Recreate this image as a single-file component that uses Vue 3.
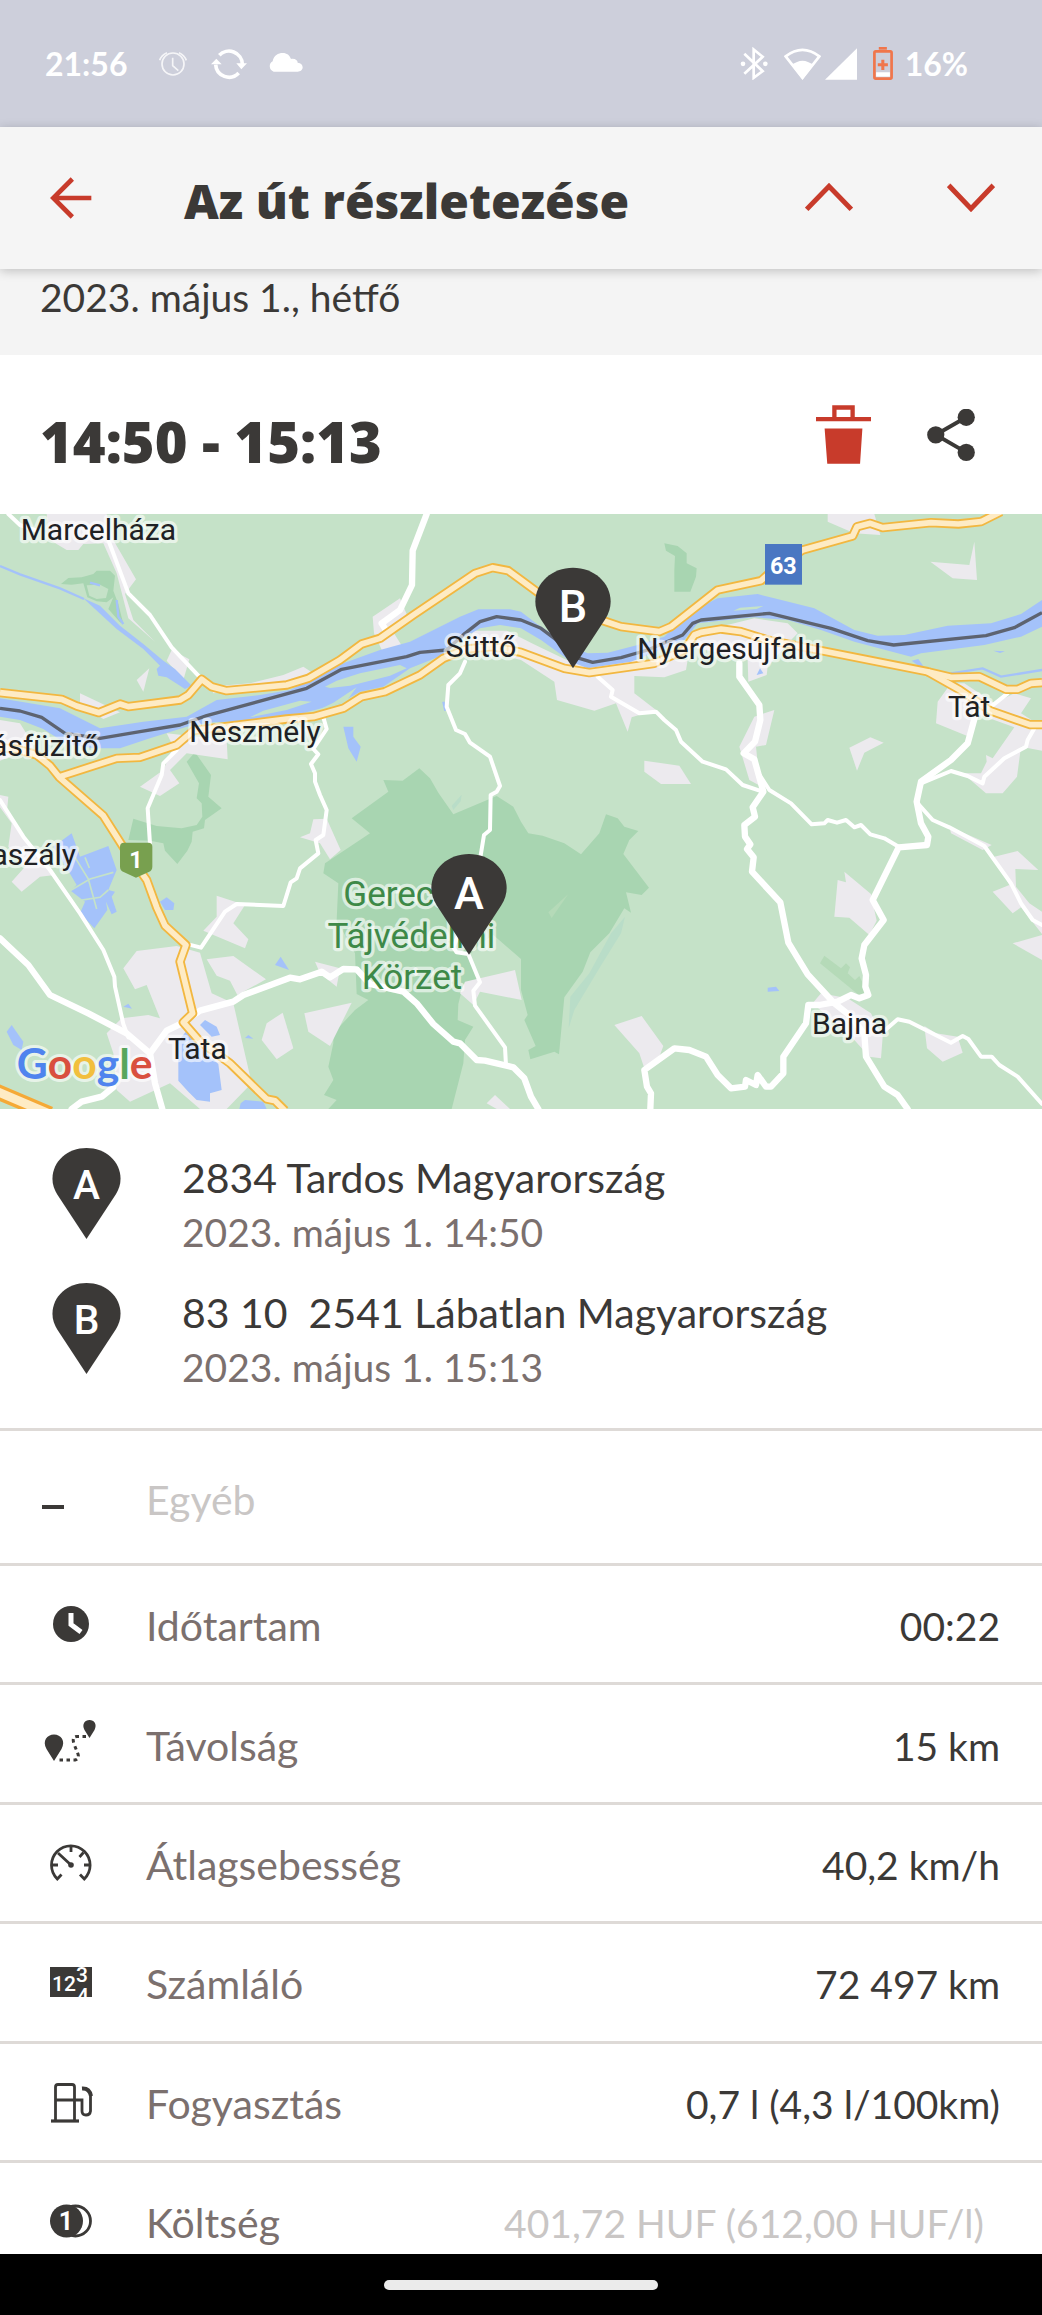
<template>
  <div class="screen">
    <header class="status-bar">
      <div class="status-left">
        <span>21:56</span>
        <svg class="status-icon" viewBox="0 0 108 108" fill="none" stroke="#fff" stroke-width="5" opacity="0.8">
          <circle cx="54" cy="54" r="33" />
          <path d="M53 35V59L70 74M14 43Q19 27 36 20M94 43Q88 27 72 20" />
        </svg>
        <svg class="status-icon" viewBox="0 0 108 108">
          <path d="M25 28A40 40 0 0 1 94 54M83 81A40 40 0 0 1 14 56" fill="none" stroke="#fff" stroke-width="11" />
          <path d="M76 52H108L91 70ZM0 55H32L16 38Z" fill="#fff" />
        </svg>
        <svg class="status-icon" viewBox="0 0 108 108">
          <path d="M20 77A17 17 0 0 1 17 46C20 28 34 21 47 21C60 21 68 28 72 39C84 37 92 43 92 50C102 51 107 57 107 64C107 72 100 77 92 77Z" fill="#fff" />
        </svg>
      </div>
      <div class="status-right">
        <svg width="28" height="33" viewBox="0 0 84 98">
          <path d="M13 20L68 72L41 92V7L68 29L13 80" fill="none" stroke="#fff" stroke-width="8" />
          <circle cx="9" cy="50" r="7" fill="#fff" />
          <circle cx="76" cy="50" r="7" fill="#fff" />
        </svg>
        <div class="signal-pair">
          <svg width="37" height="32" viewBox="0 0 112 96">
            <path d="M5 25Q56 -14 107 25L56 90Z" fill="none" stroke="#fff" stroke-width="8" />
            <path d="M23 52Q56 24 89 52L56 95Z" fill="#fff" />
          </svg>
          <svg width="32" height="32" viewBox="0 0 96 96"><path d="M0 95H96V1Z" fill="#fff" /></svg>
        </div>
        <div class="battery">
          <svg width="20" height="33" viewBox="0 0 59 98">
            <path d="M17 0H41V8H17Z" fill="#f0764b" />
            <rect x="4" y="13" width="51" height="81" rx="4" fill="none" stroke="#f0764b" stroke-width="8" />
            <path d="M29 38V68M14 53H44" stroke="#f0764b" stroke-width="9" />
            <path d="M9 75H50V88H9Z" fill="#fff" />
          </svg>
          <span>16%</span>
        </div>
      </div>
    </header>

    <nav class="app-bar">
      <button class="icon-btn" type="button" aria-label="Vissza">
        <svg viewBox="0 0 144 144"><path d="M76 15L19 72L76 129M19 72H133" stroke-width="14" /></svg>
      </button>
      <h1>Az út részletezése</h1>
      <div class="app-bar-actions">
        <button class="icon-btn" type="button" aria-label="Előző út">
          <svg viewBox="0 0 144 144"><path d="M5 106L72 37L139 106" stroke-width="15" /></svg>
        </button>
        <button class="icon-btn" type="button" aria-label="Következő út">
          <svg viewBox="0 0 144 144"><path d="M5 34L72 104L139 34" stroke-width="15" /></svg>
        </button>
      </div>
    </nav>

    <main class="content">
      <p class="date">2023. május 1., hétfő</p>

      <section class="trip-head">
        <h2>14:50 - 15:13</h2>
        <button class="plain-btn" type="button" aria-label="Törlés">
          <svg width="55" height="59" viewBox="0 0 166 176" fill="#c83b2b">
            <path d="M0 35H166V48H0ZM49 0H117V35H104V13H62V35H49ZM26 70H140L133 176H34Z" />
          </svg>
        </button>
        <button class="plain-btn" type="button" aria-label="Megosztás">
          <svg width="48" height="52" viewBox="0 0 144 157" fill="#3b3937">
            <path d="M118 25L26 78L118 131" fill="none" stroke="#3b3937" stroke-width="12" />
            <circle cx="118" cy="25" r="26" />
            <circle cx="26" cy="78" r="26" />
            <circle cx="118" cy="131" r="26" />
          </svg>
        </button>
      </section>

      <svg class="map" viewBox="0 0 3126 1785" role="img" aria-label="Térkép">
        <rect width="3126" height="1785" fill="#c5e2c8" />
        <path v-for="d in map.parks" :key="d" :d="d" fill="#a8d5b1" />
        <path d="M2473 1325L2523 1363L2538 1348L2550 1360L2543 1378L2565 1398L2578 1386L2593 1418V1443L2573 1440L2460 1348Z" fill="#b5dab8" />
        <path d="M1875 1208L1863 1258L1798 1363L1723 1488L1706 1543L1711 1448L1768 1378L1833 1258ZM1355 875L1385 842L1382 862L1360 888Z" fill="#b9ddc8" />
        <path d="M1705 1140L1645 1195L1655 1212Z" fill="#b5dab8" />
        <path d="M260 214L300 212L325 225L318 252L290 255L268 245Z" fill="#c5e2c8" />
        <path v-for="d in map.towns" :key="d" :d="d" fill="#eceaee" />
        <path v-for="d in map.water" :key="d" :d="d" fill="#a4c2fa" />
        <path v-for="d in map.islands" :key="d" :d="d" fill="#c5e2c8" />
        <path d="M0 156L60 181L180 223L252 255M270 206L300 214M350 258L355 308L370 330M2853 478L2948 463L3003 488L3126 468M1330 563L1336 590" fill="none" stroke="#a4c2fa" stroke-width="7" />
        <path d="M225 1030L265 1095L290 1185M210 1130L270 1095L340 1075M255 1030L268 1062M235 1160L300 1150L325 1128" fill="none" stroke="#c5e2c8" stroke-width="5" />
        <path :d="map.border" fill="none" stroke="#5d6370" stroke-width="10" stroke-linejoin="round" />
        <g fill="none" stroke="#fff" stroke-linejoin="round" stroke-linecap="round">
          <path v-for="d in map.lanes" :key="d" :d="d" stroke-width="12" />
          <path v-for="d in map.streets" :key="d" :d="d" stroke-width="19" />
        </g>
        <g fill="none" stroke-linejoin="round">
          <path v-for="d in map.highways" :key="d" :d="d" stroke="#f2b740" stroke-width="28" />
          <path d="M-20 1728L150 1800" stroke="#f5a936" stroke-width="46" />
          <path v-for="d in map.highways" :key="d" :d="d" stroke="#feebc4" stroke-width="17" />
          <path d="M-20 1728L150 1800" stroke="#feebc4" stroke-width="26" />
        </g>

        <rect x="2295" y="90" width="111" height="122" fill="#4a77c2" />
        <text class="shield" x="2350" y="181">63</text>
        <path d="M372 986H445Q457 986 457 998V1058Q457 1070 446 1074L408 1091L371 1074Q360 1070 360 1058V998Q360 986 372 986Z" fill="#78a04f" />
        <text class="shield" x="408" y="1062">1</text>

        <text
          v-for="label in labels"
          :key="label.name"
          class="map-label"
          :class="{ park: label.park }"
          :x="label.x"
          :y="label.y"
          :text-anchor="label.anchor"
        >{{ label.name }}</text>

        <text class="brand" x="50" y="1694">
          <tspan fill="#4f84ee">G</tspan><tspan fill="#d9503f">o</tspan><tspan fill="#f2bf3e">o</tspan><tspan fill="#4f84ee">g</tspan><tspan fill="#58a65c">l</tspan><tspan fill="#d9503f">e</tspan>
        </text>

        <g v-for="stop in stops" :key="stop.letter" :transform="`translate(${stop.x} ${stop.y})`">
          <path :d="pinShape" fill="#3b3937" />
          <text class="pin-letter" x="0" y="-138">{{ stop.letter }}</text>
        </g>
      </svg>

      <ul class="stops">
        <li v-for="stop in stops" :key="stop.letter">
          <svg class="pin" viewBox="-113 -302 226 302">
            <path :d="pinShape" fill="#3b3937" />
            <text class="pin-letter" x="0" y="-134">{{ stop.letter }}</text>
          </svg>
          <div>
            <p class="address">{{ stop.address }}</p>
            <p class="time">{{ stop.time }}</p>
          </div>
        </li>
      </ul>

      <div class="category">
        <span class="dash"></span>
        <span class="category-name">Egyéb</span>
      </div>

      <dl class="facts">
        <div v-for="fact in facts" :key="fact.icon" class="fact">
          <svg class="fact-icon" viewBox="0 0 54 54" fill="none" stroke="#3b3937">
            <template v-if="fact.icon === 'clock'">
              <circle cx="27" cy="27" r="18" fill="#3b3937" stroke="none" />
              <path d="M27 16V27.500L37 35" stroke="#fff" stroke-width="5" />
            </template>
            <template v-else-if="fact.icon === 'route'">
              <path d="M10 44L2.500 32C-2 24 3 17.500 10 17.500S22 24 17.500 32ZM45.500 21L40.500 13C37.500 7 41 3 45.500 3S53.500 7 50.500 13Z" fill="#3b3937" stroke="none" />
              <path d="M15.500 43H31Q35.500 42 34 37L30 27Q27.500 19.500 33 19.500H42" stroke-width="3" stroke-dasharray="3.500 3.500" />
            </template>
            <template v-else-if="fact.icon === 'gauge'">
              <path d="M17.500 38.500L13.300 43A19.300 19.300 0 1 1 40.300 43L36 38.500" stroke-width="2.800" />
              <path d="M27 10V16M8 29H14M40 29H46M39.500 16.500L35.500 21M14 17L27 29" stroke-width="2.800" />
              <circle cx="27" cy="29" r="2.800" fill="#3b3937" stroke="none" />
            </template>
            <template v-else-if="fact.icon === 'counter'">
              <clipPath id="counter-face"><path d="M6 12H48V42H6Z" /></clipPath>
              <path d="M6 12H48V42H6Z" fill="#3b3937" stroke="none" />
              <g class="digits" clip-path="url(#counter-face)">
                <text x="8" y="36">12</text>
                <text x="32" y="27">3</text>
                <text x="33" y="48">4</text>
              </g>
            </template>
            <template v-else-if="fact.icon === 'fuel'">
              <path d="M11.500 45V12Q11.500 9.500 14 9.500H28Q30.500 9.500 30.500 12V45M11.500 25H38V36Q38 40 42 40T46.500 36V20" stroke-width="2.800" />
              <path d="M7 46H35" stroke-width="3.200" />
              <path d="M38 13.500Q45.500 13 47 21" stroke-width="4" />
            </template>
            <template v-else>
              <circle cx="31.500" cy="27" r="15" fill="#fff" stroke-width="2.800" />
              <circle cx="22.500" cy="27" r="16.500" fill="#3b3937" stroke="none" />
              <text class="coin" x="22" y="36">1</text>
            </template>
          </svg>
          <dt>{{ fact.label }}</dt>
          <dd :class="{ muted: fact.muted }">{{ fact.value }}</dd>
        </div>
      </dl>
    </main>

    <footer class="gesture-bar"><span></span></footer>
  </div>
</template>

<script setup>
// Pin with its tip at the origin
const pinShape = 'M0 0L-97 -148Q-113 -174 -113 -200C-113 -258 -62 -302 0 -302S113 -258 113 -200Q113 -174 97 -148Z'

const stops = [
  { letter: 'A', x: 1407, y: 1322, address: '2834 Tardos Magyarország', time: '2023. május 1. 14:50' },
  { letter: 'B', x: 1719, y: 463, address: '83 10  2541 Lábatlan Magyarország', time: '2023. május 1. 15:13' }
]

const facts = [
  { icon: 'clock', label: 'Időtartam', value: '00:22' },
  { icon: 'route', label: 'Távolság', value: '15 km' },
  { icon: 'gauge', label: 'Átlagsebesség', value: '40,2 km/h' },
  { icon: 'counter', label: 'Számláló', value: '72 497 km' },
  { icon: 'fuel', label: 'Fogyasztás', value: '0,7 l (4,3 l/100km)' },
  { icon: 'coins', label: 'Költség', value: '401,72 HUF (612,00 HUF/l)', muted: true }
]

const labels = [
  { name: 'Marcelháza', x: 62, y: 78 },
  { name: 'Süttő', x: 1337, y: 430 },
  { name: 'Neszmély', x: 568, y: 684 },
  { name: 'ásfüzitő', x: 296, y: 726, anchor: 'end' },
  { name: 'aszály', x: 228, y: 1052, anchor: 'end' },
  { name: 'Nyergesújfalu', x: 1912, y: 435 },
  { name: 'Tát', x: 2844, y: 608 },
  { name: 'Bajna', x: 2436, y: 1560 },
  { name: 'Tata', x: 504, y: 1635 },
  { name: 'Gerecsei', x: 1030, y: 1175, park: true },
  { name: 'Tájvédelmi', x: 1234, y: 1302, park: true, anchor: 'middle' },
  { name: 'Körzet', x: 1236, y: 1425, park: true, anchor: 'middle' }
]

const map = {
  parks: [
    'M183 210L205 192L245 190L280 180L290 170H330L345 185L340 230L355 270L370 330L360 325L325 285L340 250L320 265L290 262L262 250L250 208L215 212Z',
    'M1993 88L2033 96L2060 118V148L2090 163L2088 188L2071 233H2023V168L2025 126L1998 110Z',
    'M585 715L633 783L625 848L665 883L615 918L612 943L578 953L575 983L562 1010L532 1050L495 1010L490 988L450 980L385 978L400 914L470 936L545 943L590 933L607 908L605 868L590 853L597 808L560 743Z',
    'M1150 798L1208 800L1258 763L1290 793L1315 836L1360 901L1490 846L1540 878L1563 923L1585 958L1628 965L1693 988L1743 1021L1798 958L1818 901L1853 913L1873 938L1915 951L1888 978L1870 1020L1947 1121L1925 1143L1878 1135L1893 1196L1873 1183L1828 1258L1771 1315L1748 1373L1693 1450L1677 1621L1663 1613L1591 1636L1585 1608L1607 1596L1573 1518L1583 1503L1563 1428V1335L1480 1263L1440 1290L1410 1320L1440 1400L1385 1430L1375 1470L1373 1518L1420 1538L1395 1578L1390 1648L1355 1785H985L1010 1758L972 1743L1000 1698L985 1658L1000 1588V1558L1065 1488L1105 1458L1070 1440L1065 1318L1010 1218L1015 1108L970 1078L975 1048L1110 958L1055 913L1165 833Z'
  ],
  towns: [
    'M140 0H320L340 78L408 196L375 240L400 318L465 383L385 313L350 178L310 88L250 90L235 108H200L150 78Z',
    'M515 408L568 436L550 498L500 440Z',
    'M448 463L430 533L410 498Z',
    'M1200 253L1222 305L1170 338L1210 403L1150 418L1122 358L1118 308Z',
    'M910 458L940 478L860 518L640 538L630 518L750 508L850 483Z',
    'M240 538L360 595L310 615L240 570Z',
    'M0 618L60 628L80 660L100 700L0 740Z',
    'M500 658L680 678L683 736L560 718L510 768L538 808L480 846L420 818L490 768L520 698Z',
    'M0 843L25 848L20 900L60 950L100 1000L165 1083L120 1088L65 1133L35 1103L75 1058L25 998L35 928L0 880Z',
    'M940 916L980 914L1022 1008L990 1036L960 988L900 970L930 958Z',
    'M650 1145L735 1173L700 1228L745 1276L735 1303L610 1250L650 1208Z',
    'M620 1336L700 1326L798 1396L712 1443L690 1400L650 1385Z',
    'M410 1311L530 1296L600 1316L635 1438L700 1468L755 1708L680 1785H600L510 1708L390 1763L350 1728L340 1618L320 1558L365 1513L445 1503L480 1513L440 1413L405 1426L370 1363Z',
    'M848 1496L880 1603L830 1636L785 1578L800 1528Z',
    'M913 1498L1055 1466L990 1596L925 1553Z',
    'M945 1343L1020 1363L1010 1418L960 1378Z',
    'M1395 1403L1545 1368L1565 1458L1440 1433L1420 1473L1380 1438Z',
    'M1485 1743L1530 1785H1490L1460 1768Z',
    'M2483 0H2623L2641 63L2563 58L2483 23Z',
    'M2791 143L2908 153L2923 83L2931 198L2858 193Z',
    'M2150 340L2203 328L2263 313L2363 328L2393 358L2373 378L2303 458L2300 483L2245 503L2243 438L2083 400L2100 350Z',
    'M2063 438L2058 468L1993 490L1903 486V538L1968 588L1895 610L1883 653L1848 568L1783 590L1671 558L1663 503L1563 438L1480 418L1400 400L1420 350L1520 350L1600 390L1700 438Z',
    'M2323 588L2298 693L2268 698L2280 815L2248 798L2218 698L2263 608Z',
    'M1933 740L2038 755L2073 810H1983L1933 773Z',
    'M2548 701L2611 670L2651 686L2593 716L2571 770Z',
    'M2813 563L2853 508H2893L2983 568L3043 538L3093 553L3063 598L3126 638V710L3063 698L3051 788L3008 838H2958L2888 778H2943L2960 743L2958 723L2978 733L3043 640L2933 600L2900 665L2808 628Z',
    'M2533 1073L2613 1140L2630 1220L2608 1263L2548 1211L2503 1208L2513 1098L2538 1105Z',
    'M2848 938L2975 993L2948 1008L2853 958Z',
    'M2983 1028L3053 1011L3115 1068L3046 1065L3048 1118L3088 1168L3126 1193V1260L3063 1180L3038 1198L2978 1133L3028 1113Z',
    'M3038 1288L3126 1263V1338Z',
    'M1843 1533L1925 1506L1990 1596L1980 1623L1933 1663L1918 1618Z',
    'M2438 1468L2463 1438L2543 1453L2613 1498L2648 1568L2643 1633L2608 1628L2563 1578Z',
    'M2773 1536L2808 1558L2873 1568L2888 1616L2828 1643L2781 1603Z'
  ],
  water: [
    // Danube
    'M0 553L180 583L300 643L430 623L560 608L650 558L780 543L870 528L950 488L1030 448L1140 408L1230 383L1380 308L1435 286H1530L1563 293L1608 328L1713 398L1763 418L1823 416L1913 393L1993 368L2063 298L2153 253L2273 240L2323 253L2443 283L2563 348L2633 365L2713 363L2843 335L2973 328L3063 300L3126 258V338L3063 368L2953 393L2763 418L2733 428L2563 383L2463 348L2363 318L2263 310L2183 318L2093 328L2053 378L1993 403L1893 443L1763 463L1713 443L1623 378L1563 343L1500 333L1440 343L1380 378L1330 423L1230 463L1150 518L1080 533L1020 568L900 600L780 620L640 625L560 638L450 673L360 703H280L200 690L130 645L60 618L0 608Z',
    'M250 253L300 275L360 335L430 390L490 440L525 465L575 515L555 525L500 490L475 485L470 465L480 455L430 405L350 345Z',
    'M215 958L240 1028L325 996L350 1068L325 1128L345 1133L335 1148L350 1193L335 1201L318 1163L322 1188L283 1243L240 1198L255 1163L212 1130L230 1113L180 1028L160 998Z',
    'M480 1163L500 1150L523 1168L520 1188H495Z',
    'M535 1580L560 1550L600 1600L655 1650L665 1728L630 1738V1763L590 1758L565 1733L535 1700Z',
    'M600 1533L615 1518L650 1538L660 1563L635 1568Z',
    'M825 1353L842 1328L867 1368Z',
    'M370 1478L385 1469L396 1484Z',
    'M735 1572L745 1563L760 1574Z',
    'M20 1553L35 1533L70 1583L65 1608L40 1593Z',
    'M718 1785L722 1768L735 1758L790 1763L800 1785Z',
    'M1030 638H1060V668L1082 698L1070 743L1045 703Z',
    'M2303 1421L2328 1418L2338 1431L2303 1433Z',
    'M2735 440L2755 435L2780 470L2765 462Z',
    'M2270 483L2280 463L2290 478Z',
    'M2980 410L3015 412L3000 417Z'
  ],
  islands: [
    'M975 518L1010 500L1080 478L1200 453L1220 463L1170 485L1050 515L990 522Z',
    'M750 610L790 590L900 560L935 563L860 588Z',
    'M2200 290L2220 281L2290 276L2270 285L2230 288Z',
    'M930 600L1000 566L1070 520L1040 560Z'
  ],
  border: 'M0 583L60 591L125 610L195 658L300 673L420 653L540 633L620 605L920 523L1025 466L1220 428L1260 415L1340 408L1395 358L1440 323L1490 308L1563 318L1623 343L1663 373L1738 433L1778 445L1863 431L1943 408L2048 363L2078 328L2103 318L2308 298L2493 343L2603 380L2681 393L2958 365L3043 341L3126 296',
  lanes: [
    'M25 0L60 33L110 50',
    'M325 78L385 238L450 303L515 400L600 490',
    'M1395 443L1380 478L1345 513L1340 578L1368 648L1395 660L1410 686L1470 728L1500 816L1490 833L1472 843L1470 948L1452 963L1443 1018L1425 1120L1380 1250L1360 1300L1370 1315L1405 1320L1440 1405L1420 1430L1425 1475L1515 1600L1518 1655',
    'M970 610L980 645L940 705L955 721L933 750L945 778V803L960 843L980 888L970 963L947 978L955 1018L900 1063L890 1093L872 1105L850 1176L710 1170L675 1193L603 1301L565 1291',
    'M530 708L490 748L485 783L443 883L450 990',
    'M0 858L70 968L150 1068L240 1198L310 1308L343 1388L345 1418L370 1530L385 1570',
    'M1793 488L1838 528L1833 548L1918 598L1968 593L1993 618L2028 648L2043 683L2108 743L2178 766L2228 813L2288 833',
    'M2280 785L2308 828L2373 868L2435 931L2473 928L2483 918L2511 926L2538 918L2563 940L2583 933L2611 961L2653 973L2696 998',
    'M2650 1553L2693 1516L2728 1523L2853 1586L2888 1566L2905 1575L2943 1628H2975L2998 1653L3053 1688L3126 1770',
    'M2763 808L2853 771L2903 786L2948 808L2953 788L3013 733L3078 698L3083 678L3105 640',
    'M2753 868L2798 918L2848 940L2953 996L3033 1108L3063 1168L3098 1218L3126 1233',
    'M2973 578L3023 538'
  ],
  streets: [
    'M1280 0L1238 110L1236 213L1200 288L1145 328L1165 360',
    'M0 1273L85 1353L150 1443L265 1498L380 1558L450 1618L465 1708L487 1785',
    'M450 1618L500 1550L545 1528L600 1490L700 1463L730 1443L870 1391L900 1396L965 1373L990 1390L1030 1365L1070 1366L1110 1410L1210 1433L1250 1468L1300 1530L1360 1583L1380 1588L1430 1638L1455 1640L1540 1660L1573 1693L1593 1748L1615 1785',
    'M215 1785L245 1763L305 1748L340 1720',
    'M2218 448V488L2278 573L2281 618L2265 683L2231 718L2263 736L2290 833L2258 880L2265 908L2233 933L2235 968L2251 991L2241 1005L2261 1030L2256 1073L2341 1165L2365 1286L2423 1381L2503 1468L2550 1505L2593 1560L2598 1628L2653 1718L2693 1743L2723 1785',
    'M2930 590L2903 688L2853 738L2763 803L2750 863L2763 928L2785 968L2781 993L2696 1000L2618 1158L2651 1218L2593 1293L2585 1333L2598 1383L2596 1418L2605 1443L2578 1453L2553 1443L2513 1463L2458 1473H2425L2418 1528L2350 1628V1678L2313 1718H2298L2273 1683L2268 1713L2238 1698L2235 1718L2193 1723L2153 1683L2118 1628L2068 1608L2023 1603L1933 1668L1941 1718L1953 1738L1951 1785'
  ],
  highways: [
    'M0 536L185 556L230 576L297 596L360 570L385 578L540 558L565 543L605 496L635 518L680 530L860 513L925 493L1020 438L1085 390L1140 373L1240 303L1425 178L1478 161L1525 170L1563 198L1620 240L1803 318L1863 338L1978 353L2013 338L2153 228L2283 200L2340 150L2408 108L2558 66L2571 38L2611 28L2648 41L2793 26L2875 30L2943 23L3003 -7',
    'M180 788L350 733L420 730L530 693L580 650L700 635L860 615L940 608L1030 583L1085 548L1155 533L1260 483L1330 433L1400 405L1480 398L1563 415L1693 463L1768 476L1963 448L2053 408L2083 363L2103 355L2163 345L2223 353L2303 378L2783 473L2853 490L2938 488L3018 526H3053L3093 508L3126 506',
    'M2783 473L2880 528L2970 590L3090 632H3126',
    'M0 700L60 708L110 723L150 755L178 790L310 905L370 1000L440 1098L470 1180L495 1235L558 1293L540 1343L578 1498L550 1525L600 1583L690 1648L800 1755L825 1760L855 1790'
  ]
}
</script>

<style>
body {
  margin: 0;
  background: #fff;
}
</style>

<style scoped>
.screen {
  display: flex;
  flex-direction: column;
  min-height: 100vh;
  background: #fff;
  color: #3b3937;
  font-family: Lato, "Open Sans", sans-serif;
  font-size: 39px;
}

h1, h2, p, ul, dl, dd { margin: 0; padding: 0; }

svg { display: block; flex: none; }

button {
  padding: 0;
  border: 0;
  background: none;
  cursor: pointer;
}

/* STATUS BAR */
.status-bar {
  display: flex;
  align-items: center;
  justify-content: space-between;
  height: 127px;
  padding: 0 74px 0 45px;
  box-sizing: border-box;
  background: #cdcfdb;
  color: #fff;
  font-size: 32px;
  font-weight: 700;
}
.status-left { display: flex; align-items: center; gap: 20px; }
.status-left span { margin-right: 8px; }
.status-icon { width: 36px; height: 36px; }
.status-right { display: flex; align-items: center; gap: 16px; }
.signal-pair { display: flex; gap: 4px; }
.battery { display: flex; align-items: center; gap: 12px; }

/* APP BAR */
.app-bar {
  position: relative;
  display: flex;
  align-items: center;
  height: 142px;
  padding: 0 47px;
  box-sizing: border-box;
  background: #f5f5f5;
  box-shadow: 0 2px 10px rgba(0, 0, 0, 0.22);
}
.app-bar h1 {
  flex: 1;
  margin-left: 89px;
  padding-top: 6px;
  font-family: "Open Sans", sans-serif;
  font-size: 48px;
  font-weight: 800;
  line-height: 60px;
}
.app-bar-actions { display: flex; gap: 94px; }
.icon-btn svg {
  width: 48px;
  height: 48px;
  fill: none;
  stroke: #c83b2b;
}

/* CONTENT */
.content { display: flex; flex: 1; flex-direction: column; }

.date {
  height: 86px;
  padding-left: 40px;
  background: #f4f4f4;
  line-height: 56px;
}

.trip-head {
  display: flex;
  align-items: center;
  gap: 56px;
  height: 159px;
  padding: 0 67px 0 40px;
}
.trip-head h2 {
  flex: 1;
  padding-top: 12px;
  font-family: "Open Sans", sans-serif;
  font-size: 56px;
  font-weight: 800;
  line-height: 68px;
}

/* MAP */
.map { width: 100%; height: auto; }
.map-label {
  font: 400 90px Roboto, sans-serif;
  fill: #202124;
  stroke: rgba(255, 255, 255, 0.6);
  stroke-width: 20px;
  stroke-linejoin: round;
  paint-order: stroke;
}
.map-label.park { font-size: 105px; fill: #3e8948; }
.shield {
  font: 700 70px Roboto, sans-serif;
  fill: #fff;
  text-anchor: middle;
}
.brand {
  font: 700 128px Lato, sans-serif;
  stroke: rgba(255, 255, 255, 0.6);
  stroke-width: 18px;
  stroke-linejoin: round;
  paint-order: stroke;
}
.pin-letter {
  font: 500 135px Roboto, sans-serif;
  fill: #fff;
  text-anchor: middle;
}

/* STOPS */
.stops {
  display: flex;
  flex-direction: column;
  gap: 25px;
  padding: 39px 42px 35px 52px;
  border-bottom: 3px solid #dedad7;
  list-style: none;
}
.stops li { display: flex; gap: 61px; height: 110px; }
.stops div { padding-top: 2px; }
.pin { width: 69px; height: 91px; }
.address, .time { line-height: 55px; white-space: pre-wrap; }
.address { font-size: 41px; }
.time { color: #7b706e; }

/* CATEGORY */
.category {
  display: flex;
  align-items: center;
  gap: 82px;
  height: 132px;
  padding: 0 42px;
  border-bottom: 3px solid #dedad7;
  color: #c9c6c5;
}
.category-name { padding-top: 4px; font-size: 41px; }
.dash {
  width: 22px;
  height: 4px;
  margin-top: 20px;
  background: #3b3937;
}

/* FACTS, the last row runs on under the gesture bar */
.facts {
  display: grid;
  flex: 1;
  grid-template-rows: repeat(5, 1fr) 91px;
  overflow: hidden;
}
.fact {
  display: flex;
  align-items: center;
  min-height: 119px;
  padding: 0 42px 0 44px;
  box-sizing: border-box;
  border-bottom: 3px solid #dedad7;
}
.fact-icon { width: 54px; height: 54px; overflow: visible; }
dt, dd { padding-top: 4px; line-height: 56px; }
dt { flex: 1; margin-left: 48px; color: #7b706e; font-size: 41px; }
dd.muted { padding-right: 16px; color: #c9c6c5; }
.digits text {
  font: 500 21px Roboto, sans-serif;
  fill: #fff;
  stroke: none;
}
.coin {
  font: 700 25px Roboto, sans-serif;
  fill: #fff;
  stroke: none;
  text-anchor: middle;
}

/* GESTURE BAR */
.gesture-bar {
  position: relative;
  display: flex;
  align-items: center;
  justify-content: center;
  height: 61px;
  background: #000;
}
.gesture-bar span {
  width: 274px;
  height: 10px;
  border-radius: 5px;
  background: #ebebeb;
}
</style>
